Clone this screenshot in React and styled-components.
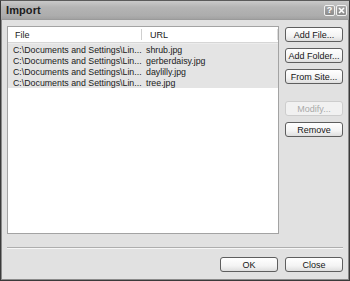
import React from "react";
import styled, { createGlobalStyle } from "styled-components";

const GlobalStyle = createGlobalStyle`
  html, body {
    margin: 0;
    padding: 0;
    background: #ffffff;
  }
  body {
    font-family: "Liberation Sans", Arial, sans-serif;
  }
`;

const files = [
  { path: "C:\\Documents and Settings\\Lin...", url: "shrub.jpg" },
  { path: "C:\\Documents and Settings\\Lin...", url: "gerberdaisy.jpg" },
  { path: "C:\\Documents and Settings\\Lin...", url: "daylilly.jpg" },
  { path: "C:\\Documents and Settings\\Lin...", url: "tree.jpg" },
];

const StyledWindow = styled.div`
  width: 350px;
  height: 281px;
  box-sizing: border-box;
  display: flex;
  flex-direction: column;
  background: #e1e1e1;
  border: 1px solid #3a3a3a;
  border-top-color: #5a5a5a;
  box-shadow: inset 1px 0 0 #8a8a8a, inset -1px -1px 0 #8a8a8a;
  overflow: hidden;
`;

const StyledTitleBar = styled.div`
  height: 18px;
  flex-shrink: 0;
  display: flex;
  align-items: center;
  justify-content: space-between;
  padding: 0 2px 0 5px;
  background: linear-gradient(#c9c9c9, #b4b4b4 35%, #adadad 80%, #a2a2a2);
  border-bottom: 1px solid #9a9a9a;
`;

const StyledTitle = styled.span`
  font-size: 11px;
  font-weight: bold;
  color: #1c1c1c;
  letter-spacing: 0.1px;
`;

const StyledCaptionButtons = styled.div`
  display: flex;
  gap: 1px;
  margin-top: 1px;
`;

const StyledCaptionButton = styled.div`
  width: 11px;
  height: 11px;
  box-sizing: border-box;
  border: 1px solid #f2f2f2;
  border-radius: 2px;
  background: linear-gradient(#a8a8a8, #8c8c8c);
  display: flex;
  align-items: center;
  justify-content: center;
  color: #ffffff;
  font-size: 9px;
  font-weight: bold;
  line-height: 1;
`;

const StyledBody = styled.div`
  flex: 1;
  display: flex;
  flex-direction: column;
  padding: 6px 6px 6px 6px;
`;

const StyledMain = styled.div`
  display: flex;
  gap: 6px;
  height: 208px;
`;

const StyledList = styled.div`
  flex: 1;
  background: #ffffff;
  border: 1px solid #a3a3a3;
  display: flex;
  flex-direction: column;
`;

const StyledHeader = styled.div`
  display: grid;
  grid-template-columns: 134px 1fr;
  height: 15px;
  border-bottom: 1px solid #d6d6d6;
  box-shadow: 0 1px 0 #ececec;
  font-size: 9px;
  color: #1a1a1a;
`;

const StyledHeaderCell = styled.div`
  display: flex;
  align-items: center;
  padding-left: ${props => (props.first ? "7px" : "8px")};
  border-right: 1px solid ${props => (props.first ? "#cfcfcf" : "#dcdcdc")};
  margin: 2px 0;
`;

const StyledRows = styled.div`
  margin-top: 1px;
`;

const StyledRow = styled.div`
  display: grid;
  grid-template-columns: 134px 1fr;
  height: 11px;
  align-items: center;
  background: #e4e4e4;
  font-size: 8.8px;
  color: #202020;
  white-space: nowrap;
`;

const StyledCell = styled.span`
  padding-left: ${props => (props.first ? "5px" : "4px")};
  overflow: hidden;
`;

const StyledButtonColumn = styled.div`
  width: 58px;
  display: flex;
  flex-direction: column;
  gap: 6px;
  padding-top: 1px;
`;

const StyledButton = styled.div`
  height: 15px;
  box-sizing: border-box;
  display: flex;
  align-items: center;
  justify-content: center;
  border: 1px solid ${props => (props.disabled ? "#cdcdcd" : "#5e5e5e")};
  border-radius: 3px;
  background: ${props =>
    props.disabled
      ? "#f1f1f1"
      : "linear-gradient(#ffffff, #f4f4f4 60%, #dedede)"};
  color: ${props => (props.disabled ? "#a9a9a9" : "#151515")};
  font-size: 9px;
  white-space: nowrap;
  margin-top: ${props => (props.spaced ? "11px" : "0")};
`;

const StyledSeparator = styled.div`
  margin-top: 13px;
  height: 1px;
  background: #aeaeae;
  border-bottom: 1px solid #f6f6f6;
`;

const StyledFooter = styled.div`
  display: flex;
  justify-content: flex-end;
  gap: 7px;
  margin-top: 8px;
`;

const StyledFooterButton = styled(StyledButton)`
  width: 58px;
`;

const App = () => (
  <>
    <GlobalStyle />
    <StyledWindow>
      <StyledTitleBar>
        <StyledTitle>Import</StyledTitle>
        <StyledCaptionButtons>
          <StyledCaptionButton>?</StyledCaptionButton>
          <StyledCaptionButton>
            <svg width="7" height="7" viewBox="0 0 7 7">
              <path d="M1 1 L6 6 M6 1 L1 6" stroke="#ffffff" strokeWidth="1.6" />
            </svg>
          </StyledCaptionButton>
        </StyledCaptionButtons>
      </StyledTitleBar>
      <StyledBody>
        <StyledMain>
          <StyledList>
            <StyledHeader>
              <StyledHeaderCell first>File</StyledHeaderCell>
              <StyledHeaderCell>URL</StyledHeaderCell>
            </StyledHeader>
            <StyledRows>
              {files.map(file => (
                <StyledRow key={file.url}>
                  <StyledCell first>{file.path}</StyledCell>
                  <StyledCell>{file.url}</StyledCell>
                </StyledRow>
              ))}
            </StyledRows>
          </StyledList>
          <StyledButtonColumn>
            <StyledButton>Add File...</StyledButton>
            <StyledButton>Add Folder...</StyledButton>
            <StyledButton>From Site...</StyledButton>
            <StyledButton disabled spaced>
              Modify...
            </StyledButton>
            <StyledButton>Remove</StyledButton>
          </StyledButtonColumn>
        </StyledMain>
        <StyledSeparator />
        <StyledFooter>
          <StyledFooterButton>OK</StyledFooterButton>
          <StyledFooterButton>Close</StyledFooterButton>
        </StyledFooter>
      </StyledBody>
    </StyledWindow>
  </>
);

export default App;
